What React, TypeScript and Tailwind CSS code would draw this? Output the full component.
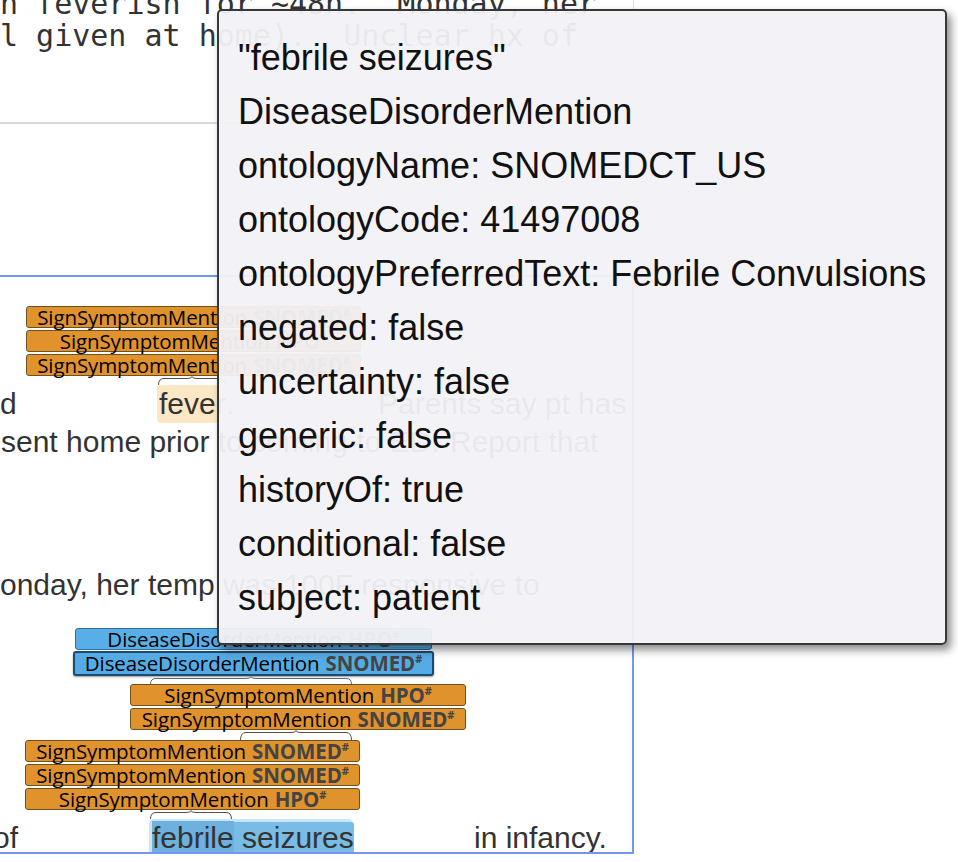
import React from 'react';

type Kind = 'sign' | 'disease';

const Label: React.FC<{ kind: Kind; src: string; className?: string; selected?: boolean }> = ({
  kind,
  src,
  className = '',
  selected,
}) => {
  const skin =
    kind === 'sign'
      ? 'border border-[#6e5020] bg-[#e0922c]'
      : selected
        ? 'border-2 border-[#1d4a72] bg-[#55abe4] shadow-[0_1px_2px_rgba(0,0,0,0.4)]'
        : 'border border-[#2f6d9c] bg-[#58aee6]';
  return (
    <div
      className={`flex shrink-0 items-center justify-center rounded-[3px] font-['Open_Sans',sans-serif] text-[20.5px] leading-none tracking-[-0.1px] text-black ${skin} ${className}`}
    >
      <span>{kind === 'sign' ? 'SignSymptomMention' : 'DiseaseDisorderMention'}</span>
      <span className="ml-[6px] font-bold text-[#444]">{src}</span>
      <span className="-mt-[10px] text-[11px] font-bold text-[#444]">#</span>
    </div>
  );
};

// curly brace between a label stack and the span it marks
const Brace: React.FC<{ w: number; h: number; className?: string; color?: string }> = ({
  w,
  h,
  className = '',
  color = '#5e4d3a',
}) => {
  const c = w / 2;
  const d = `M0.5 ${h} Q0.5 2.5 6 2.5 H${c - 5} Q${c} 2.5 ${c} 0.5 Q${c} 2.5 ${c + 5} 2.5 H${w - 6} Q${w - 0.5} 2.5 ${w - 0.5} ${h}`;
  return (
    <svg width={w} height={h} viewBox={`0 0 ${w} ${h}`} className={`block shrink-0 ${className}`}>
      <path d={d} fill="none" stroke={color} strokeWidth="1" />
    </svg>
  );
};

const tooltipLines = [
  '"febrile seizures"',
  'DiseaseDisorderMention',
  'ontologyName: SNOMEDCT_US',
  'ontologyCode: 41497008',
  'ontologyPreferredText: Febrile Convulsions',
  'negated: false',
  'uncertainty: false',
  'generic: false',
  'historyOf: true',
  'conditional: false',
  'subject: patient',
];

export default function App() {
  return (
    <div className="relative h-[862px] w-[958px] overflow-hidden bg-white">
      {/* raw note text */}
      <div className="h-[124px] w-[634px] overflow-hidden border-r border-b-2 border-r-[#e2e2e2] border-b-[#d9d9d9]">
        <div className="-mt-[12px] whitespace-pre font-['DejaVu_Sans_Mono',monospace] text-[30px] leading-[32px] text-[#333]">
          <div>n feverish for ~48h.  Monday, her</div>
          <div>l given at home).  Unclear hx of</div>
        </div>
      </div>

      {/* annotated view */}
      <div className="mt-[151px] flex h-[579px] w-[634px] flex-col overflow-hidden border-y-2 border-r-2 border-[#7596ef] pt-[29px] font-['Liberation_Sans',Arial,sans-serif] text-[30px] text-[#333]">
        <div className="ml-[26px] flex w-[335px] flex-col gap-[2px]">
          <Label kind="sign" src="SNOMED" className="h-[22px]" />
          <Label kind="sign" src="HPO" className="h-[22px]" />
          <Label kind="sign" src="SNOMED" className="h-[22px]" />
        </div>
        <Brace w={68} h={9} className="ml-[158px]" />
        <div className="flex h-[38px] shrink-0 whitespace-pre leading-[38px]">
          <span className="w-[157px] shrink-0">d</span>
          <span className="w-[69px] shrink-0 rounded-[4px] bg-[#fde8c6] pl-[2px]">fever</span>
          <span className="w-[152px] shrink-0">.</span>
          <span>Parents say pt has</span>
        </div>
        <div className="flex h-[38px] shrink-0 whitespace-pre leading-[38px]">
          <span className="w-[450px] shrink-0 pl-[1px]">sent home prior to coming to ED.</span>
          <span>Report that</span>
        </div>
        <div className="h-[105px] shrink-0" />
        <div className="flex h-[38px] shrink-0 whitespace-pre leading-[38px]">
          <span>onday, her temp was 100F responsive to</span>
        </div>
        <div className="h-[24px] shrink-0" />

        <Label kind="disease" src="HPO" className="ml-[75px] h-[22px] w-[357px]" />
        <Label kind="disease" src="SNOMED" selected className="mt-[1px] ml-[73px] h-[25px] w-[361px]" />
        <Brace w={202} h={8} className="ml-[150px]" color="#4d6f8c" />
        <div className="ml-[130px] flex w-[336px] flex-col gap-[2px]">
          <Label kind="sign" src="HPO" className="h-[22px]" />
          <Label kind="sign" src="SNOMED" className="h-[22px]" />
        </div>
        <Brace w={112} h={10} className="ml-[240px]" />
        <div className="ml-[25px] flex w-[335px] flex-col gap-[2px]">
          <Label kind="sign" src="SNOMED" className="h-[22px]" />
          <Label kind="sign" src="SNOMED" className="h-[22px]" />
          <Label kind="sign" src="HPO" className="h-[22px]" />
        </div>
        <Brace w={82} h={9} className="ml-[150px]" />
        <div className="flex h-[38px] shrink-0 whitespace-pre leading-[38px]">
          <span className="-ml-[7px] w-[156px] shrink-0">of</span>
          <span className="flex h-[38px] w-[204px] shrink-0 rounded-[5px] bg-[#c9e5f6] px-[3px] pt-[3px]">
            <span className="h-full grow rounded-[3px] bg-[#79bce5] leading-[32px]">
              <span className="bg-[#6cb1df]">febrile</span> seizures
            </span>
          </span>
          <span className="w-[121px] shrink-0" />
          <span>in infancy.</span>
        </div>
      </div>

      {/* hover tooltip */}
      <div className="absolute top-[9px] left-[217px] h-[636px] w-[730px] rounded-[5px] border-2 border-[#383838] bg-[#f2f2f7]/95 pt-[20px] pl-[19px] font-['Liberation_Sans',Arial,sans-serif] text-[36px] leading-[54px] whitespace-pre text-[#111] shadow-[4px_5px_8px_rgba(0,0,0,0.45)]">
        {tooltipLines.map((line) => (
          <div key={line}>{line}</div>
        ))}
      </div>
    </div>
  );
}
